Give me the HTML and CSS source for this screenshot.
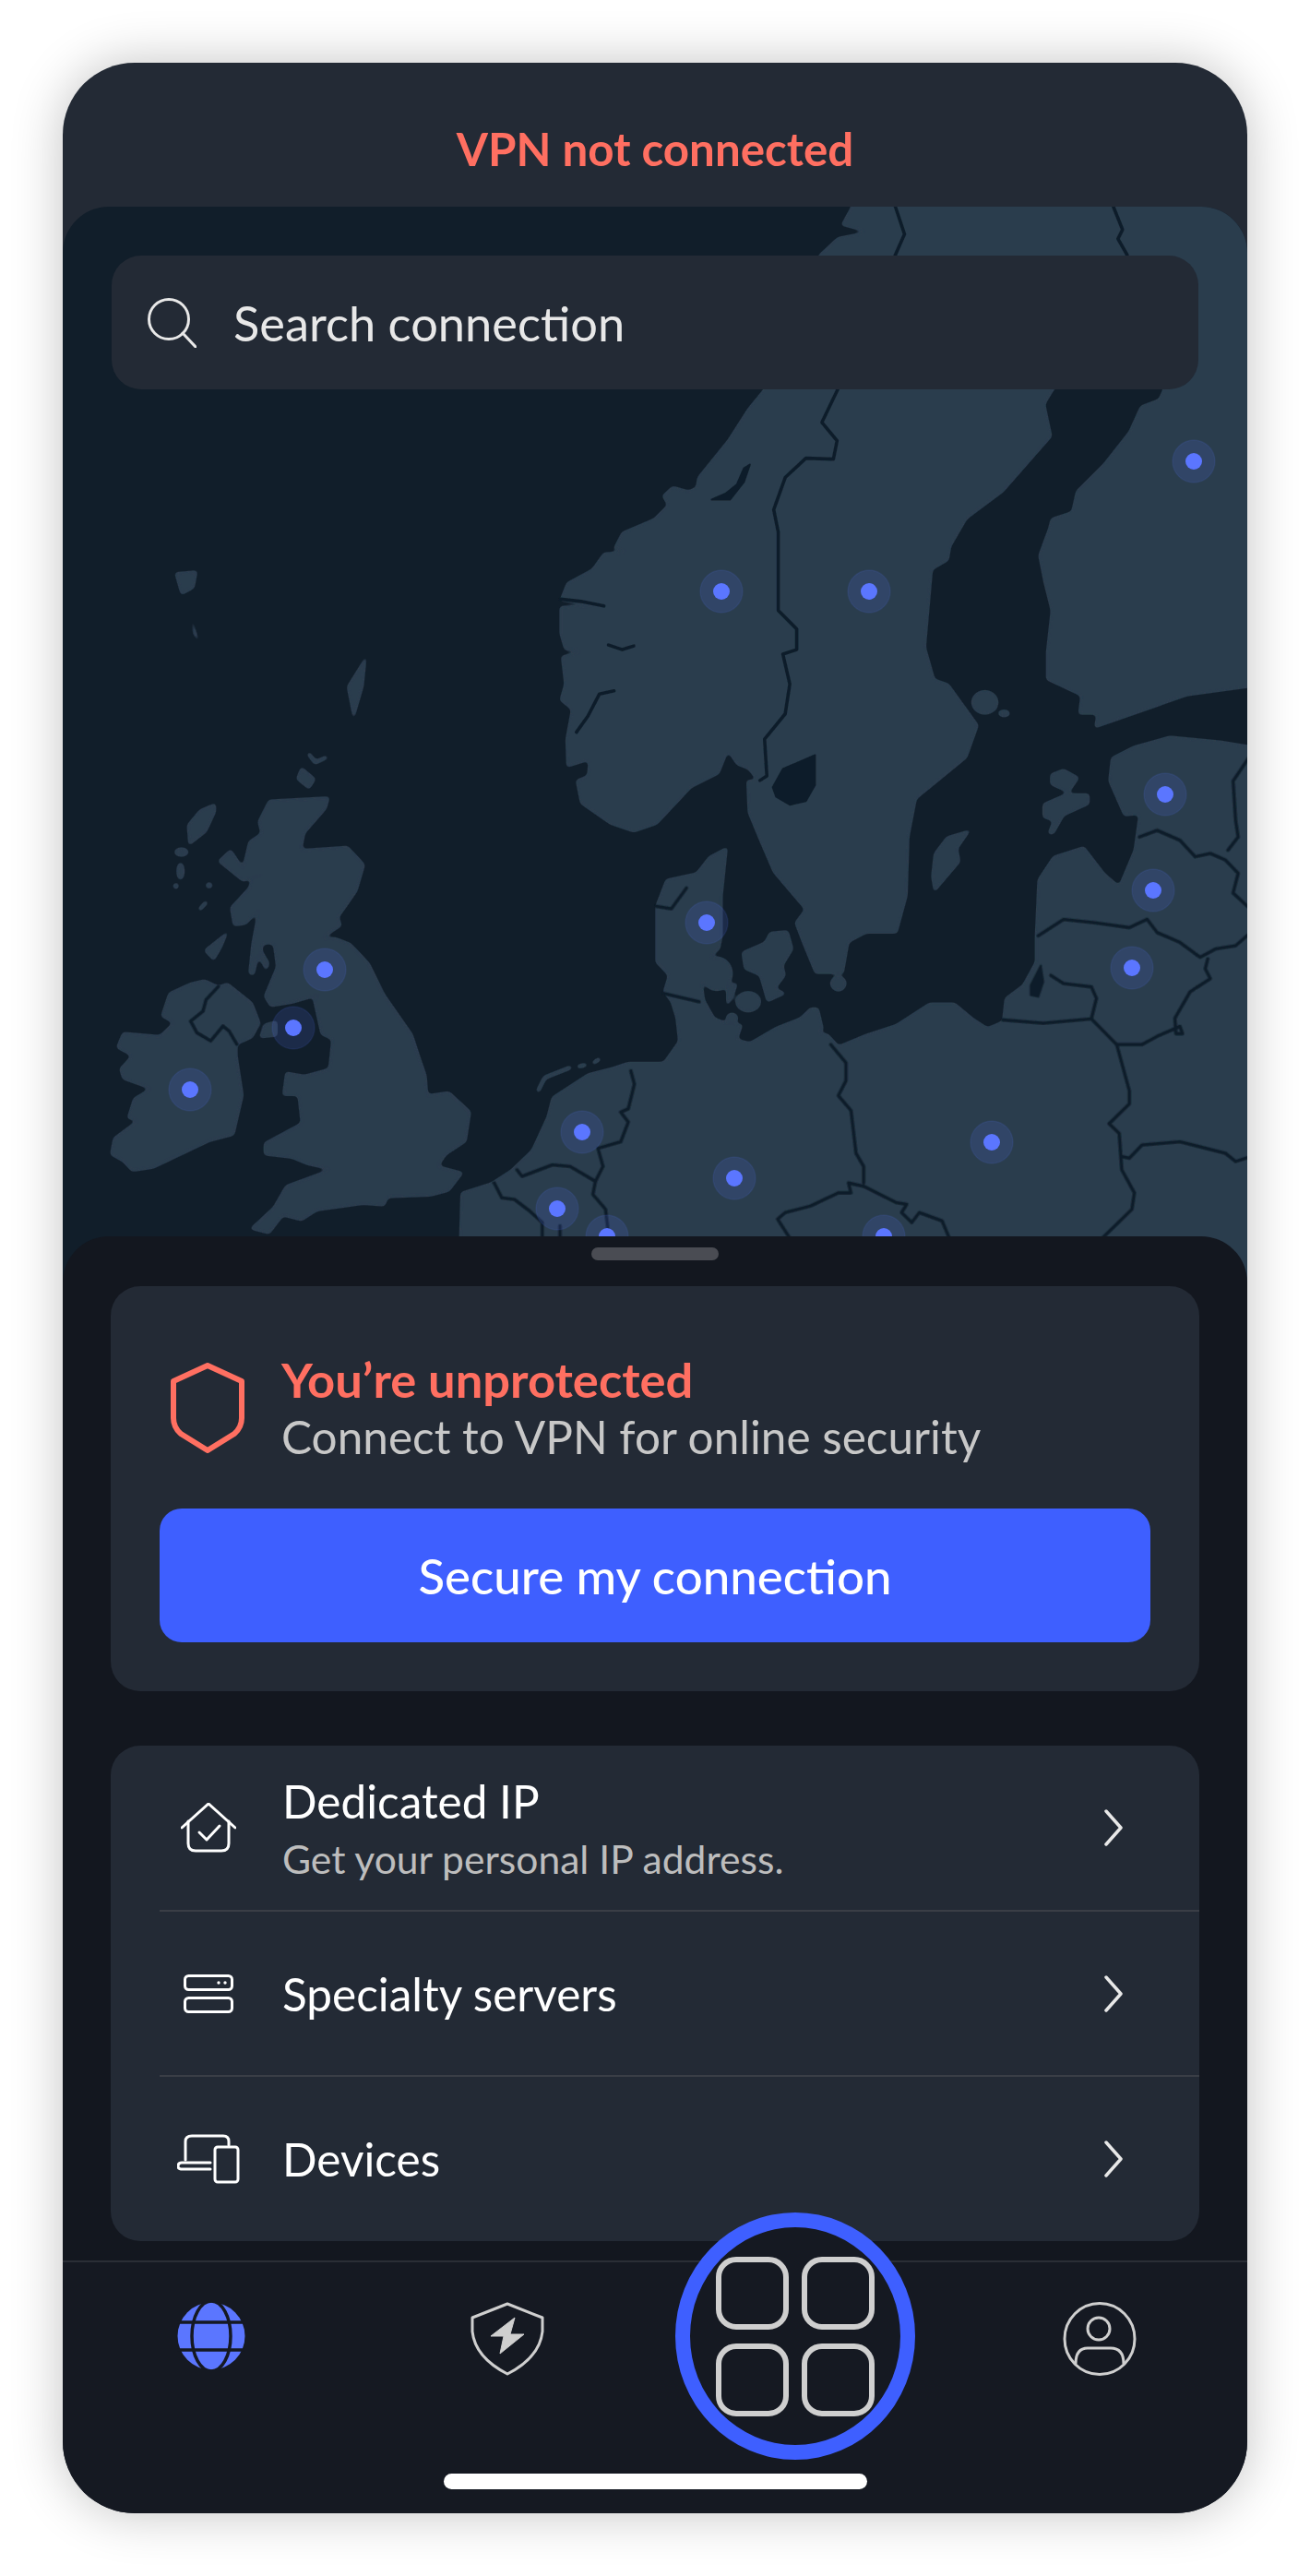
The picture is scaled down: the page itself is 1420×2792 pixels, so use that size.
FILE: index.html
```html
<!DOCTYPE html>
<html lang="en">
<head>
<meta charset="utf-8">
<title>VPN</title>
<link rel="stylesheet" href="styles.css">
</head>
<body>
<main class="phone">
  <header class="status-bar">VPN not connected</header>

  <section class="map">
    <svg class="map-art" viewBox="68 224 1284 1166" width="1284" height="1166" aria-hidden="true">
      <defs>
        <filter id="round" filterUnits="userSpaceOnUse" x="0" y="150" width="1450" height="1320">
          <feGaussianBlur in="SourceGraphic" stdDeviation="2"/>
          <feComponentTransfer><feFuncA type="linear" slope="5" intercept="-2"/></feComponentTransfer>
          <feGaussianBlur stdDeviation="0.5"/>
        </filter>
        <filter id="soft" filterUnits="userSpaceOnUse" x="0" y="150" width="1450" height="1320">
          <feGaussianBlur stdDeviation="0.6"/>
        </filter>
      </defs>

      <g filter="url(#round)">
        <g transform="translate(580 224) scale(.4975)">
          <path class="land" d="M690,-30 L690,0 668,40 725,55 660,68 620,105 560,250 500,397 465,440 420,510 355,590 352,612 335,620 300,610 278,630 290,650 260,680 190,710 172,745 222,752 150,755 125,790 70,820 55,858 150,868 55,872 55,930 65,965 110,968 58,980 65,1040 55,1075 80,1095 68,1160 70,1220 118,1205 115,1240 90,1250 100,1300 165,1345 215,1362 265,1345 340,1265 400,1235 420,1185 440,1215 465,1225 485,1250 462,1250 465,1320 490,1380 520,1450 589,1531 567,1560 583,1602 611,1670 671,1670 683,1602 721,1582 788,1582 810,1501 814,1373 830,1290 940,1200 965,1130 900,1040 870,1030 850,960 865,790 900,770 905,740 940,680 1020,620 1090,540 1125,500 1110,430 1130,397 1200,330 1370,330 1370,397 1360,420 1320,435 1295,490 1240,560 1180,620 1170,665 1125,680 1120,700 1098,760 1110,820 1125,880 1115,970 1115,1030 1190,1065 1185,1105 1225,1105 1220,1135 1320,1100 1420,1065 1600,1040 1600,-30Z"/>
          <ellipse class="land" cx="980" cy="1080" rx="28" ry="25"/>
          <ellipse class="land" cx="1022" cy="1104" rx="12" ry="7"/>
        </g>
        <g transform="translate(500 800) scale(.5486 .3571)">
          <path class="land" d="M1600,35 L1500,10 1400,-5 1330,25 1285,60 1280,130 1310,235 1340,230 1330,340 1300,450 1270,410 1230,330 1170,360 1140,430 1135,600 1135,680 1110,750 1075,790 1070,860 1040,880 1010,850 975,805 925,805 860,870 800,900 745,935 725,900 695,890 715,885 705,820 690,820 670,850 620,880 570,925 545,915 555,870 525,865 500,850 480,795 475,740 480,680 510,640 515,600 515,480 525,332 490,360 465,410 405,430 385,510 385,680 410,720 400,770 415,800 425,850 430,920 400,985 330,985 300,1000 250,1020 180,1090 170,1150 140,1250 100,1310 60,1350 0,1380 -5,1650 1600,1650Z"/>
          <ellipse class="land" cx="505" cy="715" rx="30" ry="50"/>
          <path class="land" d="M555,650 L600,620 610,590 645,585 655,640 635,690 640,720 620,760 640,775 605,800 590,720 560,700Z"/>
          <ellipse class="land" cx="567" cy="800" rx="24" ry="30"/>
          <ellipse class="land" cx="535" cy="850" rx="11" ry="15"/>
          <ellipse class="land" cx="745" cy="745" rx="15" ry="22"/>
          <path class="land" d="M525,750 L545,745 535,790 525,810Z"/>
          <path class="land" d="M1005,280 L960,300 935,350 930,420 935,465 985,375 980,335Z"/>
          <path class="land" d="M1165,110 L1190,95 1220,120 1200,165 1165,140Z"/>
          <path class="land" d="M1195,170 L1240,170 1240,200 1190,235 1170,290 1160,290 1170,250 1150,240 1150,200Z"/>
          <path class="land-thin" d="M152,1070 L165,1030 215,1000"/>
          <path class="land-thin" d="M232,997 L245,992"/>
          <path class="land-thin" d="M262,985 L272,975"/>
        </g>
        <g transform="translate(100 780) scale(.3333 .3571)">
          <path class="land" d="M575,245 L770,235 760,270 690,345 680,395 830,385 885,440 860,520 800,600 810,625 745,665 790,662 840,680 900,740 950,835 1040,955 1070,1040 1085,1080 1090,1140 1160,1130 1230,1190 1215,1280 1150,1320 1125,1355 1205,1375 1160,1430 1100,1445 960,1450 950,1475 880,1470 730,1490 680,1520 620,1505 575,1560 515,1545 590,1480 630,1415 775,1365 700,1350 650,1330 560,1320 560,1285 680,1225 670,1140 620,1140 630,1070 690,1080 770,1060 780,970 745,955 720,850 740,835 650,860 580,870 560,840 600,750 590,680 555,680 550,700 575,740 565,760 540,715 525,775 510,770 520,680 540,580 500,620 460,625 450,570 510,510 520,480 550,470 490,490 410,430 450,395 490,450 510,370 550,345 540,310Z"/>
          <path class="land" d="M80,995 L100,950 220,960 265,920 225,900 250,830 320,800 365,790 410,810 440,800 520,860 545,920 520,965 470,985 470,1020 490,1140 460,1260 380,1280 200,1360 130,1370 100,1340 60,1320 70,1270 150,1215 115,1210 135,1150 190,1120 100,1090 90,1060 130,1020Z"/>
          <path class="land" d="M545,965 L560,925 600,915 600,960Z"/>
          <path class="land" d="M400,255 L350,275 310,320 315,380 370,340 400,280Z"/>
          <ellipse class="land" cx="290" cy="402" rx="22" ry="12"/>
          <ellipse class="land" cx="287" cy="460" rx="11" ry="25"/>
          <ellipse class="land" cx="272" cy="505" rx="8" ry="8"/>
          <ellipse class="land" cx="380" cy="503" rx="10" ry="8"/>
          <path class="land-thin" d="M350,575 L370,555"/>
          <path class="land" d="M440,645 L365,700 395,730 420,690Z"/>
          <path class="land" d="M680,145 L665,180 705,210 725,180Z"/>
          <path class="land-thin" d="M705,105 L725,130 760,115"/>
          <path class="land" d="M890,-190 L830,-100 850,-5 880,-100Z"/>
          <path class="land" d="M270,-445 L340,-450 330,-400 290,-380Z"/>
          <path class="land" d="M325,-300 L345,-240 330,-260Z"/>
        </g>
      </g>

      <g filter="url(#soft)">
        <g transform="translate(580 224) scale(.4975)">
          <path class="sea" d="M610,1195 L610,1260 590,1295 555,1303 525,1285 518,1265 540,1225Z"/>
          <path class="sea" d="M468,562 L455,600 425,638 385,638 415,625 440,605 455,570Z"/>
          <path class="line" d="M785,0 L805,60 785,105 720,250 660,397 625,470 658,510 650,550 590,548 545,590 520,660 530,710 530,800 530,880 570,920 570,965 540,975 555,1040 545,1105 500,1160 505,1240 490,1250"/>
          <path class="line" d="M1260,0 L1280,50 1270,70 1290,105 1320,300"/>
          <path class="line" d="M55,855 L100,860 150,870"/>
          <path class="line" d="M160,955 L190,965 215,957"/>
          <path class="line" d="M172,1055 L140,1062 115,1110 90,1145"/>
        </g>
        <g transform="translate(500 800) scale(.5486 .3571)">
          <path class="sea" d="M1145,690 L1150,740 1140,785 1125,780 1125,750Z"/>
          <path class="line" d="M385,510 L415,518 445,455"/>
          <path class="line" d="M335,1010 L342,1050 330,1125 315,1135 330,1165 315,1225 270,1245 280,1300 265,1345 260,1385 285,1430 292,1520"/>
          <path class="line" d="M110,1310 L120,1330 180,1295 215,1300 265,1345"/>
          <path class="line" d="M65,1350 L80,1395 105,1400 135,1435 160,1470 160,1520"/>
          <path class="line" d="M195,1480 L195,1520"/>
          <path class="line" d="M400,775 L470,800"/>
          <path class="line" d="M730,930 L760,985 760,1040 745,1085 770,1130 780,1260 795,1300 795,1350"/>
          <path class="line" d="M795,1360 L765,1350 770,1380 745,1380 690,1420 640,1440 625,1460 650,1520"/>
          <path class="line" d="M795,1360 L860,1410 880,1415 870,1440 890,1470 905,1440 950,1465 965,1520"/>
          <path class="line" d="M1070,855 L1150,865 1245,852"/>
          <path class="line" d="M1245,852 L1295,930 1320,1070 1320,1110 1280,1170 1300,1200 1305,1310 1330,1380 1325,1430 1265,1520"/>
          <path class="line" d="M1165,720 L1190,745 1245,755 1255,790 1245,852"/>
          <path class="line" d="M1295,930 L1345,930 1375,905 1420,875 1425,897 1412,897 1410,850 1440,770 1480,730 1470,700 1475,670"/>
          <path class="line" d="M1140,600 L1190,550 1250,560 1320,575 1355,550 1375,590 1420,620 1460,665 1490,640 1530,630 1560,590"/>
          <path class="line" d="M1340,300 L1375,280 1420,310 1450,360 1480,350 1510,370 1535,410 1525,470 1560,520"/>
          <path class="line" d="M1560,50 L1525,130 1530,250 1535,300 1515,340"/>
          <path class="line" d="M1305,1270 L1320,1275 1345,1235 1420,1225 1510,1260 1530,1285 1560,1270"/>
        </g>
        <g transform="translate(100 780) scale(.3333 .3571)">
          <path class="line" d="M410,810 L370,850 360,885 320,915 340,950 385,975 425,930 445,945 470,985"/>
        </g>
      </g>

      <g class="pin"><circle cx="1294" cy="500" r="23"/><circle class="pin-dot" cx="1294" cy="500" r="9"/></g>
      <g class="pin"><circle cx="782" cy="641" r="23"/><circle class="pin-dot" cx="782" cy="641" r="9"/></g>
      <g class="pin"><circle cx="942" cy="641" r="23"/><circle class="pin-dot" cx="942" cy="641" r="9"/></g>
      <g class="pin"><circle cx="1263" cy="861" r="23"/><circle class="pin-dot" cx="1263" cy="861" r="9"/></g>
      <g class="pin"><circle cx="1250" cy="965" r="23"/><circle class="pin-dot" cx="1250" cy="965" r="9"/></g>
      <g class="pin"><circle cx="766" cy="1000" r="23"/><circle class="pin-dot" cx="766" cy="1000" r="9"/></g>
      <g class="pin"><circle cx="1227" cy="1049" r="23"/><circle class="pin-dot" cx="1227" cy="1049" r="9"/></g>
      <g class="pin"><circle cx="352" cy="1051" r="23"/><circle class="pin-dot" cx="352" cy="1051" r="9"/></g>
      <g class="pin"><circle cx="318" cy="1114" r="23"/><circle class="pin-dot" cx="318" cy="1114" r="9"/></g>
      <g class="pin"><circle cx="206" cy="1181" r="23"/><circle class="pin-dot" cx="206" cy="1181" r="9"/></g>
      <g class="pin"><circle cx="631" cy="1227" r="23"/><circle class="pin-dot" cx="631" cy="1227" r="9"/></g>
      <g class="pin"><circle cx="796" cy="1277" r="23"/><circle class="pin-dot" cx="796" cy="1277" r="9"/></g>
      <g class="pin"><circle cx="1075" cy="1238" r="23"/><circle class="pin-dot" cx="1075" cy="1238" r="9"/></g>
      <g class="pin"><circle cx="604" cy="1310" r="23"/><circle class="pin-dot" cx="604" cy="1310" r="9"/></g>
      <g class="pin"><circle cx="658" cy="1340" r="23"/><circle class="pin-dot" cx="658" cy="1340" r="9"/></g>
      <g class="pin"><circle cx="958" cy="1340" r="23"/><circle class="pin-dot" cx="958" cy="1340" r="9"/></g>
    </svg>

    <div class="search">
      <svg class="search-icon" viewBox="0 0 53 54" width="53" height="54" aria-hidden="true">
        <circle cx="23" cy="23" r="21.5"/><path d="M38 38 L52 53"/>
      </svg>
      <span>Search connection</span>
    </div>
  </section>

  <section class="sheet">
    <div class="handle"></div>

    <div class="card protect">
      <div class="protect-head">
        <svg class="protect-shield" viewBox="0 0 80 98" width="80" height="98" aria-hidden="true">
          <path d="M40 3 L77 20 V60 Q77 70 69 77 L40 95 L11 77 Q3 70 3 60 V20Z"/>
        </svg>
        <div class="protect-text">
          <div class="protect-title">You’re unprotected</div>
          <div class="protect-sub">Connect to VPN for online security</div>
        </div>
      </div>
      <button class="cta" type="button">Secure my connection</button>
    </div>

    <div class="card list">
      <div class="row row-tall">
        <span class="row-icon">
          <svg class="ico" viewBox="0 0 60 54" width="60" height="54" aria-hidden="true">
            <path d="M1 27 L30 1 L59 27"/><path d="M8 20 V44 Q8 52 16 52 H44 Q52 52 52 44 V20"/><path d="M20 32 L28 40 L42 25"/>
          </svg>
        </span>
        <div class="row-text">
          <div class="row-title">Dedicated IP</div>
          <div class="row-sub">Get your personal IP address.</div>
        </div>
        <svg class="chev" viewBox="0 0 22 40" width="22" height="40" aria-hidden="true"><path d="M3 2 L19 20 L3 38"/></svg>
      </div>
      <div class="row">
        <span class="row-icon">
          <svg class="ico" viewBox="0 0 54 42" width="54" height="42" aria-hidden="true">
            <rect x="1.5" y="1.5" width="51" height="15" rx="4"/><rect x="1.5" y="25.5" width="51" height="15" rx="4"/>
            <circle class="ico-fill" cx="38" cy="9" r="1.7"/><circle class="ico-fill" cx="45" cy="9" r="1.7"/>
          </svg>
        </span>
        <div class="row-text"><div class="row-title">Specialty servers</div></div>
        <svg class="chev" viewBox="0 0 22 40" width="22" height="40" aria-hidden="true"><path d="M3 2 L19 20 L3 38"/></svg>
      </div>
      <div class="row">
        <span class="row-icon">
          <svg class="ico" viewBox="0 0 68 54" width="68" height="54" aria-hidden="true">
            <path d="M9 28 V8 Q9 2 16 2 H50 Q56 2 56 8 V12"/>
            <path d="M36 31 H5 Q1 31 1 35 Q1 38 6 38 H36"/>
            <rect x="41" y="14" width="25" height="38" rx="3"/>
          </svg>
        </span>
        <div class="row-text"><div class="row-title">Devices</div></div>
        <svg class="chev" viewBox="0 0 22 40" width="22" height="40" aria-hidden="true"><path d="M3 2 L19 20 L3 38"/></svg>
      </div>
    </div>

    <nav class="nav">
      <div class="nav-item">
        <svg viewBox="0 0 74 74" width="74" height="74" aria-hidden="true">
          <circle class="globe" cx="37" cy="37" r="36.5"/>
          <ellipse class="globe-line" cx="37" cy="37" rx="21" ry="38"/>
          <path class="globe-line" d="M0 22 H74 M0 52 H74"/>
        </svg>
      </div>
      <div class="nav-item">
        <svg viewBox="0 0 80 80" width="80" height="80" aria-hidden="true">
          <path class="nav-line" d="M40 2 L2 17 V32 Q5 60 40 78 Q75 60 78 32 V17Z"/>
          <path class="nav-fill" d="M48 17 L22 37 H36 L32 56 L58 35 H43Z"/>
        </svg>
      </div>
      <div class="nav-item"></div>
      <div class="nav-item">
        <svg viewBox="0 0 80 80" width="80" height="80" aria-hidden="true">
          <ellipse class="nav-line" cx="40" cy="40" rx="38" ry="38.5"/>
          <circle class="nav-line" cx="39" cy="29" r="12"/>
          <path class="nav-line" d="M14 67 Q14 50 27 50 H52 Q66 50 66 67"/>
        </svg>
      </div>

      <div class="ring">
        <div class="tile-grid">
          <span class="tile"></span><span class="tile"></span><span class="tile"></span><span class="tile"></span>
        </div>
      </div>
      <div class="home-bar"></div>
    </nav>
  </section>
</main>
</body>
</html>
```

FILE: styles.css
```css
* { box-sizing: border-box; }

html, body { margin: 0; padding: 0; background: #fff; }

body {
  width: 1420px;
  height: 2792px;
  padding: 68px;
  font-family: "Lato", "Open Sans", sans-serif;
  overflow: hidden;
}

.phone {
  width: 1284px;
  height: 2656px;
  display: flex;
  flex-direction: column;
  background: #232a35;
  border-radius: 78px;
  overflow: hidden;
  box-shadow: 0 0 56px rgba(0, 0, 0, 0.24);
}

.status-bar {
  height: 156px;
  flex: none;
  display: flex;
  align-items: center;
  justify-content: center;
  padding-top: 30px;
  color: #ff6f61;
  font-size: 49.3px;
  font-weight: 700;
}

.map {
  position: relative;
  flex: none;
  height: 1166px;
  margin-bottom: -50px;
  padding: 53px 53px 0;
  background: #111e2a;
  border-radius: 50px 50px 0 0;
  overflow: hidden;
}

.map-art { position: absolute; left: 0; top: 0; }

.land { fill: #2c3c4e; stroke: #2c3c4e; stroke-width: 2; stroke-linejoin: round; vector-effect: non-scaling-stroke; }
.land-thin { fill: none; stroke: #2c3c4e; stroke-width: 5; stroke-linecap: round; stroke-linejoin: round; vector-effect: non-scaling-stroke; }
.sea { fill: #111e2a; stroke: #111e2a; stroke-width: 2; stroke-linejoin: round; vector-effect: non-scaling-stroke; }
.line { fill: none; stroke: #111e2a; stroke-width: 3.6; stroke-linecap: round; stroke-linejoin: round; vector-effect: non-scaling-stroke; }

.pin circle { fill: rgba(91, 118, 255, 0.15); stroke: rgba(91, 118, 255, 0.1); stroke-width: 1.5; }
.pin .pin-dot { fill: #5b76ff; stroke: none; }

.search {
  position: relative;
  height: 145px;
  display: flex;
  align-items: center;
  gap: 40px;
  padding-left: 39px;
  background: #232a35;
  border-radius: 32px;
  color: #e8e8e8;
  font-size: 52.4px;
}

.search-icon { flex: none; fill: none; stroke: #e8e8e8; stroke-width: 3; stroke-linecap: round; }

.sheet {
  position: relative;
  flex: 1;
  display: flex;
  flex-direction: column;
  background: #13171f;
  border-radius: 50px 50px 0 0;
}

.handle {
  flex: none;
  width: 138px;
  height: 14px;
  margin: 12px auto 0;
  border-radius: 7px;
  background: #4a4c53;
}

.card {
  flex: none;
  margin: 0 52px;
  background: #232a35;
  border-radius: 32px;
}

.protect {
  margin-top: 28px;
  height: 439px;
  padding: 69px 53px 53px;
  display: flex;
  flex-direction: column;
  justify-content: space-between;
}

.protect-head { display: flex; align-items: center; gap: 40px; padding-left: 12px; }

.protect-shield { flex: none; fill: none; stroke: #ff6f61; stroke-width: 6; stroke-linejoin: round; }

.protect-text { line-height: 63px; }
.protect-title { color: #ff6f61; font-size: 52.5px; font-weight: 700; }
.protect-sub { color: #c8c8c8; font-size: 49.5px; }

.cta {
  height: 145px;
  border: 0;
  border-radius: 24px;
  background: #3e5fff;
  color: #fff;
  font: 500 52.8px "Lato", sans-serif;
}

.list {
  margin-top: 59px;
  height: 537px;
  display: flex;
  flex-direction: column;
}

.row {
  flex: 1;
  display: flex;
  align-items: center;
  margin-left: 53px;
  padding-right: 82px;
  border-top: 2px solid #3a3e46;
}

.row-tall { border-top: 0; }

.row-icon { flex: none; width: 133px; padding-right: 27px; display: flex; justify-content: center; }

.ico { fill: none; stroke: #fff; stroke-width: 3; stroke-linecap: round; stroke-linejoin: round; }
.ico-fill { fill: #fff; stroke: none; }

.row-text { flex: 1; }
.row-title { color: #fff; font-size: 49.5px; line-height: 60px; }
.row-sub { color: #bdbdbd; font-size: 42.6px; line-height: 50px; margin-top: 8px; }

.chev { flex: none; fill: none; stroke: #e8e8e8; stroke-width: 3.5; stroke-linecap: round; stroke-linejoin: round; }

.nav {
  position: relative;
  flex: 1;
  margin-top: 21px;
  padding-top: 43px;
  display: grid;
  grid-template-columns: repeat(4, 1fr);
  align-items: start;
  justify-items: center;
  background: #151922;
  border-top: 2px solid #2a2e36;
}

.globe { fill: #5b76ff; }
.globe-line { fill: none; stroke: #151922; stroke-width: 3.5; }

.nav-line { fill: none; stroke: #cfcfcf; stroke-width: 3; stroke-linejoin: round; }
.nav-fill { fill: #cfcfcf; stroke: #cfcfcf; stroke-width: 1; stroke-linejoin: round; }

.ring {
  position: absolute;
  left: 664px;
  top: -54px;
  width: 260px;
  height: 268px;
  display: flex;
  align-items: center;
  justify-content: center;
  background: #151922;
  border: 16px solid #3e5fff;
  border-radius: 50%;
}

.tile-grid {
  display: grid;
  grid-template-columns: 79px 79px;
  grid-auto-rows: 79px;
  gap: 15px 14px;
}

.tile { border: 6px solid #cfcfcf; border-radius: 22px; }

.home-bar {
  position: absolute;
  left: 413px;
  bottom: 26px;
  width: 459px;
  height: 17px;
  border-radius: 9px;
  background: #fff;
}
```
